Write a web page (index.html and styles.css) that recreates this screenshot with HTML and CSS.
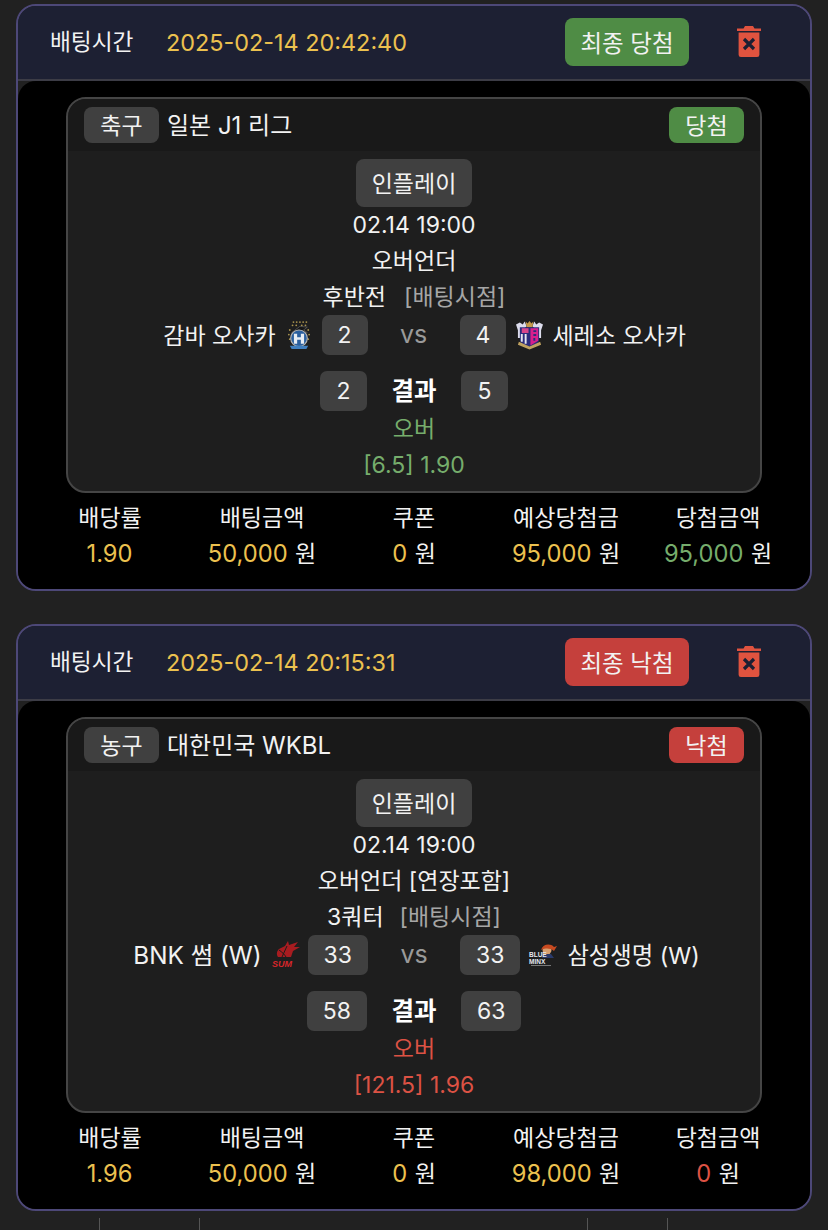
FILE: index.html
```html
<!DOCTYPE html>
<html lang="ko">
<head>
<meta charset="utf-8">
<title>배팅내역</title>
<link rel="stylesheet" href="styles.css">
</head>
<body>
<main class="page">

<section class="card">
  <header class="card-head">
    <span class="head-label">배팅시간</span>
    <span class="head-date">2025-02-14 20:42:40</span>
    <span class="final final-win"><span>최종 당첨</span></span>
    <svg class="trash" viewBox="0 0 24 31"><path fill="#e0533f" d="M8 0h8l1.5 2.5H24v2.6H0V2.5h6.5zM1.6 6.5h20.8v22.2a2.3 2.3 0 0 1-2.3 2.3H3.9a2.3 2.3 0 0 1-2.3-2.3z"/><path stroke="#1c1f33" stroke-width="3.2" d="M7 13l10 10M17 13L7 23"/></svg>
  </header>
  <div class="card-body">
    <article class="game">
      <div class="game-head">
        <span class="badge badge-sport"><span class="lift">축구</span></span>
        <span class="league"><span class="lift">일본 J1 리그</span></span>
        <span class="badge badge-win"><span class="lift">당첨</span></span>
      </div>
      <div class="game-main">
        <span class="inplay"><span class="lift">인플레이</span></span>
        <div class="line">02.14 19:00</div>
        <div class="line">오버언더</div>
        <div class="line period"><span>후반전</span><span class="muted">[배팅시점]</span></div>
        <div class="teams">
          <div class="team team-left">
            <span class="lift">감바 오사카</span>
            <svg class="logo logo-gamba" viewBox="0 0 26 32"><g fill="#a8924e"><circle cx="7" cy="1.5" r="1"/><circle cx="10.5" cy="1.5" r="1"/><circle cx="14" cy="1.5" r="1"/><circle cx="17.5" cy="1.5" r="1"/><circle cx="21" cy="1.5" r="1"/><circle cx="6" cy="5" r="1"/><circle cx="10" cy="5" r="1"/><circle cx="16" cy="5" r="1"/><circle cx="20" cy="5" r="1"/><circle cx="3" cy="10" r="1"/><circle cx="23" cy="10" r="1"/><circle cx="2" cy="15" r="1"/><circle cx="24" cy="15" r="1"/><circle cx="3" cy="20" r="1"/><circle cx="23" cy="20" r="1"/></g><path fill="#171717" stroke="#777" stroke-width=".6" d="M5 13l9-7 8 1-4 3 4 3-17 3z"/><circle cx="13" cy="19" r="9" fill="#2a5f9e" stroke="#b4b4b4" stroke-width="1.2"/><path fill="#e6ecf3" d="M7.5 14h3.5v11H7.5zM15 14h3.500v11H15zM11 18h4v2.500h-4z"/><path fill="#3f7fc0" d="M3 27h20l-2 3.500H5z"/></svg>
          </div>
          <span class="score">2</span>
          <span class="vs"><span class="lift">vs</span></span>
          <span class="score">4</span>
          <div class="team team-right">
            <svg class="logo logo-wide" viewBox="0 0 28 30"><path fill="#dcdcec" d="M0 4l4-2 3 2 2-3 2 5-3 3-3 9H2V10zM28 4l-4-2-3 2-2-3-2 5 3 3 3 9h3V10z"/><path fill="#c69a4a" d="M10 1l2 2 2-2.500 2 2.500 2-2-1 6h-6z"/><path fill="#2c2c7c" d="M4 7h20v13c0 4-6 6-10 7-4-1-10-3-10-7z"/><path fill="#e8e8f0" d="M5 14h2v8H5zM9 14h2v10H9z"/><path fill="#d8468c" d="M6 8h7v5H6z"/><path fill="#d81f8c" d="M15 8h8v13l-8 5z"/><path fill="#2c2c7c" d="M18 10h3v2h-3zM18 14h3v2h-3zM18 18h2v3h-2z"/><path fill="#c0a260" d="M3 22l11 5 11-5 1 3-12 5L2 25z"/></svg>
            <span class="lift">세레소 오사카</span>
          </div>
        </div>
        <div class="result">
          <span class="result-side"><span class="score score-result">2</span></span>
          <strong class="result-label">결과</strong>
          <span class="result-side result-right"><span class="score score-result">5</span></span>
        </div>
        <div class="line line-result pos">오버</div>
        <div class="line pos">[6.5] 1.90</div>
      </div>
    </article>
    <dl class="stats">
      <div class="stat"><dt>배당률</dt><dd><b class="gold">1.90</b></dd></div>
      <div class="stat"><dt>배팅금액</dt><dd><b class="gold">50,000</b> 원</dd></div>
      <div class="stat"><dt>쿠폰</dt><dd><b class="gold">0</b> 원</dd></div>
      <div class="stat"><dt>예상당첨금</dt><dd><b class="gold">95,000</b> 원</dd></div>
      <div class="stat"><dt>당첨금액</dt><dd><b class="pos">95,000</b> 원</dd></div>
    </dl>
  </div>
</section>

<section class="card">
  <header class="card-head">
    <span class="head-label">배팅시간</span>
    <span class="head-date">2025-02-14 20:15:31</span>
    <span class="final final-lose"><span>최종 낙첨</span></span>
    <svg class="trash" viewBox="0 0 24 31"><path fill="#e0533f" d="M8 0h8l1.5 2.5H24v2.6H0V2.5h6.5zM1.6 6.5h20.8v22.2a2.3 2.3 0 0 1-2.3 2.3H3.9a2.3 2.3 0 0 1-2.3-2.3z"/><path stroke="#1c1f33" stroke-width="3.2" d="M7 13l10 10M17 13L7 23"/></svg>
  </header>
  <div class="card-body">
    <article class="game">
      <div class="game-head">
        <span class="badge badge-sport"><span class="lift">농구</span></span>
        <span class="league"><span class="lift">대한민국 WKBL</span></span>
        <span class="badge badge-lose"><span class="lift">낙첨</span></span>
      </div>
      <div class="game-main">
        <span class="inplay"><span class="lift">인플레이</span></span>
        <div class="line">02.14 19:00</div>
        <div class="line">오버언더 [연장포함]</div>
        <div class="line period period-tight"><span>3쿼터</span><span class="muted">[배팅시점]</span></div>
        <div class="teams">
          <div class="team team-left">
            <span class="lift team-bnk">BNK 썸 (W)</span>
            <svg class="logo logo-sum" viewBox="0 0 30 28"><path fill="#a81c20" d="M8 8l6-3 3-5 1 4 9-3-4 5 6 0-7 4-2 6H7C5 13 6 10 8 8z"/><path stroke="#1c1c1c" fill="none" d="M8 9c3 2 6 5 7 7M16 5l-5 11"/><text class="logo-sum-text" x="1" y="26">SUM</text></svg>
          </div>
          <span class="score">33</span>
          <span class="vs"><span class="lift">vs</span></span>
          <span class="score">33</span>
          <div class="team team-right team-minx">
            <svg class="logo logo-minx" viewBox="0 0 30 22"><circle cx="19" cy="6" r="4.500" fill="#d8a070"/><path fill="#c84a20" d="M13 6c2-6 9-7 13-3l3-1-3 5c-4-3-8-3-13-1z"/><path fill="#2a3a6a" d="M15 10h8l3 4H14z"/><text class="logo-minx-text" x="1" y="13">BLUE</text><text class="logo-minx-text" x="1" y="19.500">MINX</text><path fill="#777" d="M3 21h20v1H3z"/></svg>
            <span class="lift team-minx-name">삼성생명 (W)</span>
          </div>
        </div>
        <div class="result">
          <span class="result-side"><span class="score score-result">58</span></span>
          <strong class="result-label">결과</strong>
          <span class="result-side result-right"><span class="score score-result">63</span></span>
        </div>
        <div class="line line-result neg">오버</div>
        <div class="line neg">[121.5] 1.96</div>
      </div>
    </article>
    <dl class="stats">
      <div class="stat"><dt>배당률</dt><dd><b class="gold">1.96</b></dd></div>
      <div class="stat"><dt>배팅금액</dt><dd><b class="gold">50,000</b> 원</dd></div>
      <div class="stat"><dt>쿠폰</dt><dd><b class="gold">0</b> 원</dd></div>
      <div class="stat"><dt>예상당첨금</dt><dd><b class="gold">98,000</b> 원</dd></div>
      <div class="stat"><dt>당첨금액</dt><dd><b class="neg">0</b> 원</dd></div>
    </dl>
  </div>
</section>

<div class="next-table"><i></i><i></i><i></i><i></i></div>
</main>
</body>
</html>
```
FILE: styles.css
```css
* { box-sizing: border-box; }
html, body { margin: 0; height: 1230px; overflow: hidden; }
body {
  background: #212121;
  color: #f2f2f2;
  font-family: Inter, "Noto Sans CJK KR", sans-serif;
  font-size: 23px;
}
.page { padding: 4px 16px 0; }
.lift { display: block; margin-top: -3px; }
.card {
  height: 587px;
  margin-bottom: 33px;
  border: 2px solid #4d4878;
  border-radius: 20px;
  background: #212121;
  overflow: hidden;
  display: flex;
  flex-direction: column;
}
.card-head {
  flex: none;
  height: 75px;
  display: flex;
  align-items: center;
  padding: 0 49px 2px 32px;
  background: #1d2033;
  border-bottom: 2px solid #3c3c46;
}
.head-label { width: 116px; font-size: 22.700px; margin-top: -2px; }
.head-date { flex: 1; font-size: 23.400px; color: #ecc14f; margin-top: 1px; }
.final {
  width: 124px;
  height: 48px;
  margin-right: 48px;
  display: flex;
  align-items: center;
  justify-content: center;
  border-radius: 8px;
  font-size: 23.500px;
}
.final-win { background: #4f8c45; }
.final-lose { background: #c5403c; }
.trash { width: 24px; height: 31px; }
.card-body {
  flex: 1;
  background: #000;
  border-radius: 18px 18px 0 0;
  padding: 16px 48px 0;
}
.game {
  height: 396px;
  border: 2px solid #454545;
  border-radius: 20px;
  background: #1e1e1e;
  overflow: hidden;
}
.game-head {
  height: 52px;
  padding: 0 16px;
  display: flex;
  align-items: center;
  background: #191919;
}
.badge {
  width: 75px;
  height: 36px;
  display: flex;
  align-items: center;
  justify-content: center;
  border-radius: 8px;
}
.badge-sport { background: #404040; }
.badge-win { background: #4f8c45; }
.badge-lose { background: #c5403c; }
.league { flex: 1; margin-left: 8px; font-size: 24px; }
.game-main {
  display: flex;
  flex-direction: column;
  align-items: center;
  padding-top: 8px;
}
.inplay {
  width: 116px;
  height: 48px;
  display: flex;
  align-items: center;
  justify-content: center;
  border-radius: 8px;
  background: #404040;
  margin-bottom: -1px;
}
.line { height: 36px; line-height: 38px; }
.period { display: flex; gap: 18px; }
.period-tight { gap: 16px; }
.muted { color: #a6a6a6; }
.teams {
  align-self: stretch;
  height: 40px;
  margin-top: 1px;
  display: flex;
  align-items: center;
}
.team { flex: 1; display: flex; align-items: center; gap: 11px; }
.team-left { justify-content: flex-end; margin-right: 10px; }
.team-right { margin-left: 10px; gap: 10px; }
.team-bnk { font-size: 24.300px; }
.team-minx-name { font-size: 23.300px; margin-left: -1px; }
.logo { width: 24px; height: 31px; }
.logo-gamba { margin-right: 1px; }
.logo-wide { width: 27px; height: 30px; margin-right: -1px; }
.logo-sum { width: 30px; height: 28px; margin: 0 -3px 0 -2px; }
.logo-minx { width: 30px; height: 22px; margin-left: -2px; }
.logo-sum-text {
  font: italic 700 9px "Liberation Sans", sans-serif;
  fill: #d8262a;
}
.logo-minx-text {
  font: 700 6.500px "Liberation Sans", sans-serif;
  fill: #e4e8f0;
}
.score {
  min-width: 46px;
  height: 40px;
  padding: 0 16px;
  display: flex;
  align-items: center;
  justify-content: center;
  border-radius: 7px;
  background: #404040;
}
.vs { width: 92px; display: flex; justify-content: center; color: #9a9a9a; font-size: 25px; }
.result {
  align-self: stretch;
  height: 40px;
  margin-top: 16px;
  display: flex;
  align-items: center;
}
.result-side { flex: 1; display: flex; justify-content: flex-end; }
.result-right { justify-content: flex-start; }
.score-result { min-width: 47px; }
.result-label { width: 94px; text-align: center; font-weight: 700; font-size: 24.500px; color: #fff; margin-top: -3px; }
.line-result { margin-top: -1px; }
.pos { color: #76ad6c; }
.neg { color: #dc5244; }
.gold { color: #ecc14f; }
.stats {
  margin: 0 -32px;
  display: flex;
  height: 95px;
}
.stat { flex: 1; text-align: center; padding-top: 7px; }
.stat dt { height: 36px; line-height: 36px; }
.stat dd { margin: 0; height: 36px; line-height: 36px; }
.stat b { font-weight: 400; margin-right: 1px; font-size: 23.700px; }
.next-table {
  display: grid;
  grid-template-columns: 100px 388px 80px 1fr;
  height: 13px;
  margin-top: -26px;
  padding-left: 83px;
}
.next-table i { border-left: 1px solid #555; }
```
